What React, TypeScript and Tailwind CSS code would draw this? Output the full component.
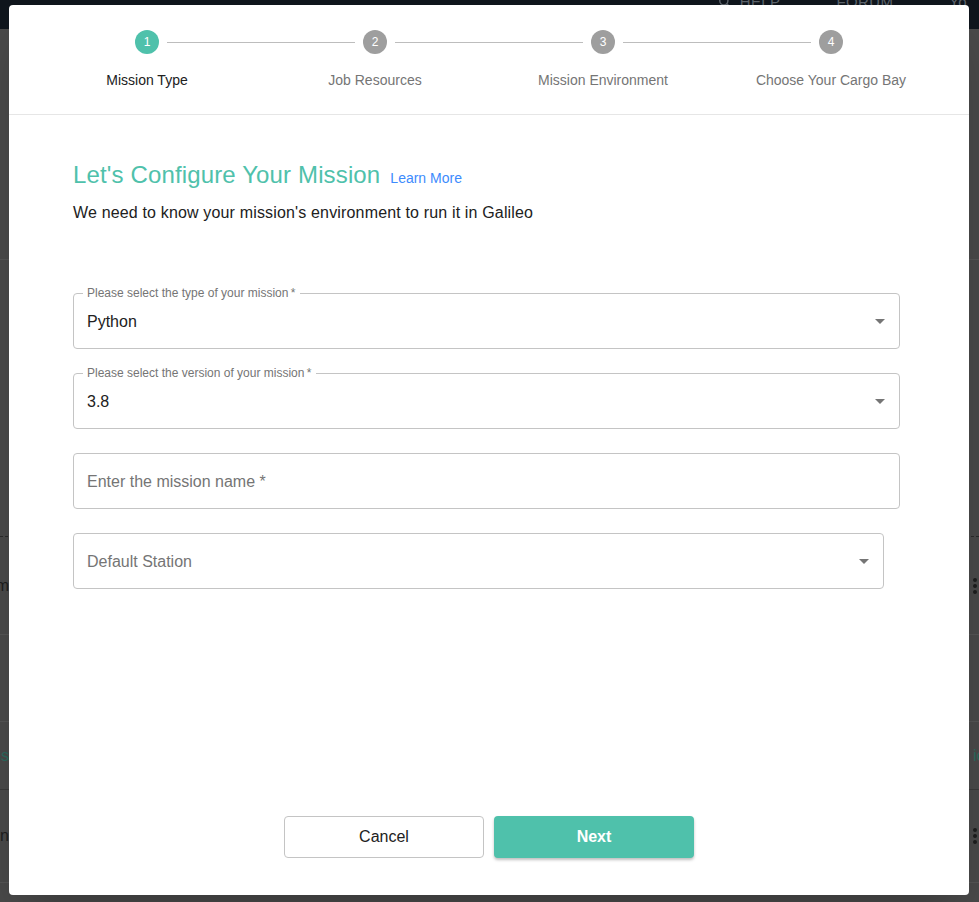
import type React from "react";

const steps = ["Mission Type", "Job Resources", "Mission Environment", "Choose Your Cargo Bay"];

const ArrowDrop: React.FC = () => (
  <svg className="w-6 h-6 shrink-0" viewBox="0 0 24 24" fill="#757575">
    <path d="M7 10l5 5 5-5z" />
  </svg>
);

// Champ "outlined" avec libellé flottant sur la bordure
const Field: React.FC<{
  label?: string;
  value?: string;
  placeholder?: string;
  select?: boolean;
  className?: string;
}> = ({ label, value, placeholder, select, className }) => (
  <div
    className={`relative h-14 border border-[#c4c4c4] rounded-[4px] flex items-center pl-[13px] pr-[7px] ${
      className || ""
    }`}
  >
    {label && (
      <span className="absolute -top-[8px] left-[9px] px-[4px] bg-white text-[12px] leading-[14px] text-[#757575] whitespace-nowrap">
        {label}
        {"\u2009*"}
      </span>
    )}
    <span
      className={`flex-1 text-[16px] pt-[1px] ${value ? "text-[#212121]" : "text-[#757575]"}`}
    >
      {value || placeholder}
    </span>
    {select && <ArrowDrop />}
  </div>
);

const Dots: React.FC = () => (
  <div className="flex flex-col gap-[2px] items-center">
    <span className="w-[4px] h-[4px] rounded-full bg-[#1e1e1e]" />
    <span className="w-[4px] h-[4px] rounded-full bg-[#1e1e1e]" />
    <span className="w-[4px] h-[4px] rounded-full bg-[#1e1e1e]" />
  </div>
);

// Ligne du tableau en arrière-plan (visible seulement sur les bords)
const BgRow: React.FC<{
  h: string;
  border: string;
  left?: React.ReactNode;
  right?: React.ReactNode;
}> = ({ h, border, left, right }) => (
  <div className={`${h} ${border} flex items-center justify-between`}>
    <div className="w-[9px] overflow-hidden flex justify-end whitespace-nowrap">{left}</div>
    <div className="w-[10px] overflow-hidden flex justify-start pl-[4px] whitespace-nowrap">
      {right}
    </div>
  </div>
);

const App: React.FC = () => {
  return (
    <div
      className="relative w-[979px] h-[902px] overflow-hidden bg-[#4a4a4a]"
      style={{ fontFamily: '"Liberation Sans", Arial, sans-serif' }}
    >
      {/* Page en arrière-plan, assombrie */}
      <div className="h-[29px] bg-[#10161d] flex items-start justify-end gap-[56px] pr-[12px] text-[15px] text-[#5d646c] tracking-wide">
        <span className="-mt-[9px] flex items-center gap-2">
          <svg width="14" height="14" viewBox="0 0 24 24" fill="none" stroke="#5d646c" strokeWidth="2.5">
            <circle cx="10" cy="10" r="7" />
            <path d="M15 15l6 6" />
          </svg>
          HELP
        </span>
        <span className="-mt-[9px]">FORUM</span>
        <span className="-mt-[9px]">Yo</span>
      </div>
      <BgRow h="h-[231px]" border="border-b border-[#555]" />
      <BgRow h="h-[277px]" border="border-b border-dashed border-[#2a2a2a]" />
      <BgRow
        h="h-[98px]"
        border="border-b border-[#555]"
        left={<span className="text-[16px] text-[#1e1e1e]">Python Program</span>}
        right={<Dots />}
      />
      <BgRow h="h-[87px]" border="border-b border-[#555]" />
      <BgRow
        h="h-[68px]"
        border="border-b border-[#3a3a3a]"
        left={<span className="text-[16px] text-[#2b6b5f]">Success</span>}
        right={<span className="text-[16px] text-[#2b6b5f]">ic</span>}
      />
      <BgRow
        h="h-[93px]"
        border="border-b border-[#555]"
        left={<span className="text-[16px] text-[#1e1e1e]">Python Station Run</span>}
        right={<Dots />}
      />

      {/* Fenêtre de dialogue */}
      <div className="absolute left-[9px] top-[5px] w-[960px] h-[890px] bg-white rounded-[4px] shadow-2xl flex flex-col">
        {/* Étapes */}
        <div className="pt-[25px] pb-6 border-b border-[#e6e6e6]">
          <div className="flex items-center px-[126px]">
            {steps.map((s, i) => (
              <div key={s} className={`flex items-center ${i < steps.length - 1 ? "flex-1" : ""}`}>
                <span
                  className={`w-6 h-6 rounded-full flex items-center justify-center text-[12px] text-white ${
                    i === 0 ? "bg-[#4fc1ab]" : "bg-[#9e9e9e]"
                  }`}
                >
                  {i + 1}
                </span>
                {i < steps.length - 1 && <span className="flex-1 h-px mx-2 bg-[#bdbdbd]" />}
              </div>
            ))}
          </div>
          <div className="grid grid-cols-4 px-6 mt-4">
            {steps.map((s, i) => (
              <span
                key={s}
                className={`text-center text-[14px] leading-5 ${i === 0 ? "text-[#212121]" : "text-[#757575]"}`}
              >
                {s}
              </span>
            ))}
          </div>
        </div>

        {/* Contenu */}
        <div className="flex-1 pl-16 pr-[69px] pt-[44px]">
          <div className="flex items-baseline">
            <h2 className="text-[24px] leading-8 tracking-[0.14px] text-[#4fc1ab]">
              Let's Configure Your Mission
            </h2>
            <a className="ml-[10px] text-[14px] text-[#3d8bfd]">Learn More</a>
          </div>
          <p className="mt-[10px] text-[16px] leading-6 tracking-[0.16px] text-[#212121]">
            We need to know your mission's environment to run it in Galileo
          </p>

          <div className="mt-[68px] flex flex-col gap-6">
            <Field label="Please select the type of your mission" value="Python" select />
            <Field label="Please select the version of your mission" value="3.8" select />
            <Field placeholder="Enter the mission name *" />
            <Field placeholder="Default Station" select className="mr-4" />
          </div>
        </div>

        {/* Actions */}
        <div className="flex justify-center gap-[10px] pb-[37px]">
          <button className="w-[200px] h-[42px] border border-[#c4c4c4] rounded-[4px] bg-white text-[16px] text-[#212121]">
            Cancel
          </button>
          <button className="w-[200px] h-[42px] rounded-[4px] bg-[#4fc1ab] text-[16px] font-bold text-white shadow-[0_2px_3px_rgba(0,0,0,0.25)]">
            Next
          </button>
        </div>
      </div>
    </div>
  );
};

export default App;
